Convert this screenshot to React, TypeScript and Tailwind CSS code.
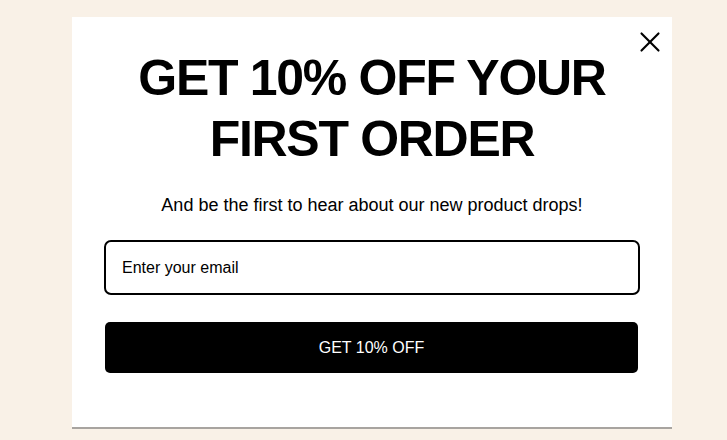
import { X } from 'lucide-react';

export default function App() {
  return (
    <div className="min-h-screen bg-[#f9f1e7] font-['Liberation_Sans',Arial,sans-serif] text-black">
      <div className="pt-[17px] pl-[72px]">
        <div className="relative w-[600px] h-[412px] bg-white border-b-2 border-[#a8a4a0] flex flex-col items-center">
          <button className="absolute top-[8px] right-[5px] p-0 text-black" aria-label="Close">
            <X size={34} strokeWidth={1.5} />
          </button>

          <h1 className="mt-[31px] text-[50px] leading-[61px] tracking-[-1.3px] font-bold text-center">
            GET 10% OFF YOUR
            <br />
            FIRST ORDER
          </h1>

          <p className="mt-[22px] text-[18px] leading-[26px] text-center">
            And be the first to hear about our new product drops!
          </p>

          <div className="mt-[22px] w-[536px] h-[55px] border-2 border-black rounded-[7px] flex items-center px-[16px]">
            <input
              type="email"
              placeholder="Enter your email"
              className="w-full bg-transparent outline-none text-[16px] placeholder:text-black"
            />
          </div>

          <button className="mt-[27px] -ml-[1px] w-[533px] h-[51px] bg-black rounded-[5px] text-white text-[16px]">
            GET 10% OFF
          </button>
        </div>
      </div>
    </div>
  );
}
